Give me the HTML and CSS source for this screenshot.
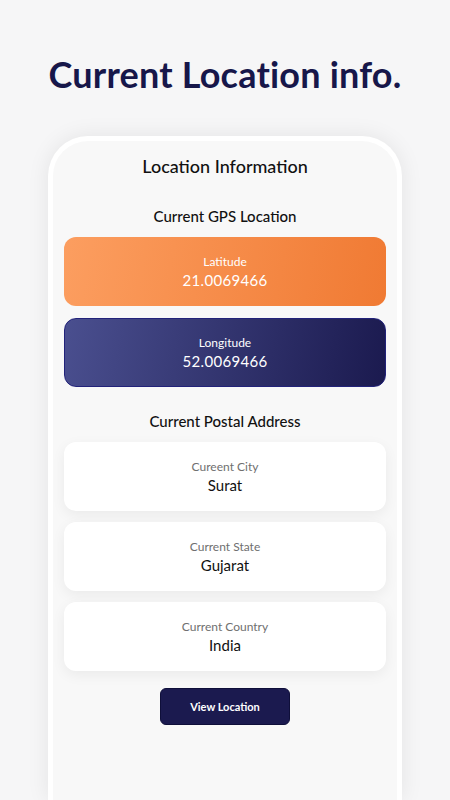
FILE: index.html
```html
<!DOCTYPE html>
<html lang="en">
<head>
  <meta charset="UTF-8" />
  <meta name="viewport" content="width=device-width, initial-scale=1" />
  <title>Current Location info.</title>
  <link rel="stylesheet" href="styles.css">
</head>
<body>
  <h1 class="headline">Current Location info.</h1>

  <div class="phone">
    <h2 class="screen-title">Location Information</h2>

    <h3 class="section-title">Current GPS Location</h3>
    <div class="coord-card orange">
      <div class="coord-label">Latitude</div>
      <div class="coord-value">21.0069466</div>
    </div>
    <div class="coord-card navy">
      <div class="coord-label">Longitude</div>
      <div class="coord-value">52.0069466</div>
    </div>

    <h3 class="section-title postal">Current Postal Address</h3>
    <div class="addr-card">
      <div class="addr-label">Cureent City</div>
      <div class="addr-value">Surat</div>
    </div>
    <div class="addr-card">
      <div class="addr-label">Current State</div>
      <div class="addr-value">Gujarat</div>
    </div>
    <div class="addr-card">
      <div class="addr-label">Current Country</div>
      <div class="addr-value">India</div>
    </div>

    <button class="view-btn">View Location</button>
  </div>
</body>
</html>
```

FILE: styles.css
```css
html, body {
  height: 100%;
  margin: 0;
  overflow: hidden;
  font-family: Lato, "Noto Sans", sans-serif;
  background: #f6f6f7;
}

body {
  display: flex;
  flex-direction: column;
  align-items: center;
}

.headline {
  margin: 52px 0 0;
  font-size: 36px;
  font-weight: 700;
  color: #17174a;
  letter-spacing: 0.2px;
}

.phone {
  margin-top: 40px;
  width: 354px;
  flex: 1;
  box-sizing: border-box;
  background: #f8f8f8;
  border: 5px solid #fff;
  border-bottom: none;
  border-radius: 40px 40px 0 0;
  box-shadow: 0 0 22px rgba(0, 0, 0, 0.08);
  display: flex;
  flex-direction: column;
  align-items: center;
  padding: 14px 11px 0;
}

.screen-title {
  margin: 0;
  font-size: 18px;
  font-weight: 500;
  color: #111;
}

.section-title {
  margin: 30px 0 12px;
  font-size: 15px;
  font-weight: 500;
  color: #111;
}

.section-title.postal {
  margin-top: 13px;
}

.coord-card, .addr-card {
  width: 100%;
  height: 69px;
  box-sizing: border-box;
  border-radius: 12px;
  display: flex;
  flex-direction: column;
  align-items: center;
  justify-content: center;
  margin-bottom: 12px;
}

.addr-card {
  margin-bottom: 11px;
}

.coord-card {
  color: #fff;
}

.orange {
  background: linear-gradient(100deg, #fc9e60 0%, #f07a33 100%);
}

.navy {
  background: linear-gradient(100deg, #4a4f8f 0%, #1b1a4f 100%);
  border: 1px solid #22227a;
}

.coord-label {
  font-size: 12px;
  line-height: 16px;
}

.coord-value {
  font-size: 15px;
  line-height: 20px;
  letter-spacing: 0.3px;
}

.addr-card {
  background: #fff;
  box-shadow: 0 4px 14px rgba(0, 0, 0, 0.06);
}

.addr-label {
  font-size: 12px;
  line-height: 16px;
  color: #6f6f6f;
}

.addr-value {
  font-size: 15px;
  line-height: 20px;
  color: #111;
}

.view-btn {
  margin-top: 6px;
  width: 130px;
  height: 37px;
  border: 1px solid #0f0f3a;
  border-radius: 6px;
  background: #1b1a4f;
  color: #fff;
  font-family: inherit;
  font-size: 11px;
  font-weight: 700;
}
```
